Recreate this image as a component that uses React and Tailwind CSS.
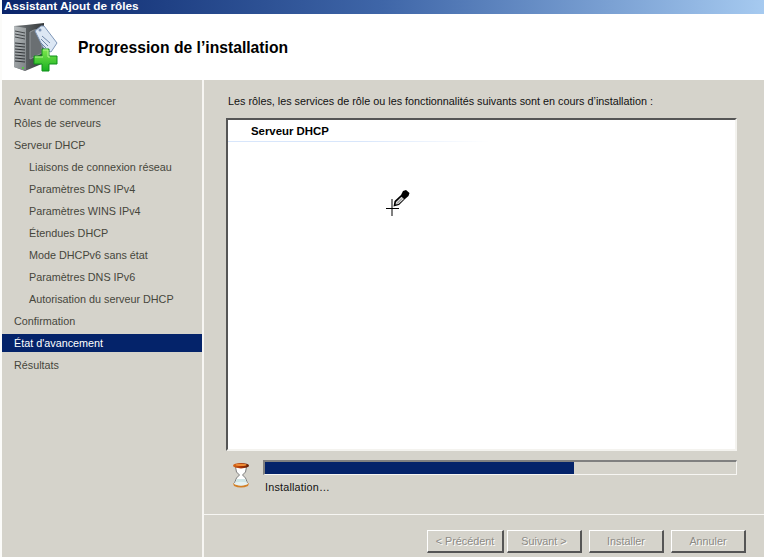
const font = { fontFamily: '"Liberation Sans", sans-serif' };

const steps = [
  ['Avant de commencer', 0],
  ['Rôles de serveurs', 0],
  ['Serveur DHCP', 0],
  ['Liaisons de connexion réseau', 1],
  ['Paramètres DNS IPv4', 1],
  ['Paramètres WINS IPv4', 1],
  ['Étendues DHCP', 1],
  ['Mode DHCPv6 sans état', 1],
  ['Paramètres DNS IPv6', 1],
  ['Autorisation du serveur DHCP', 1],
  ['Confirmation', 0],
  ["État d'avancement", 0, true],
  ['Résultats', 0],
];

function ServerIcon() {
  return (
    <svg width="46" height="49" viewBox="0 0 46 49">
      <defs>
        <linearGradient id="sv" x1="0" x2="1" y1="0" y2="0">
          <stop offset="0" stopColor="#74797c" />
          <stop offset="1" stopColor="#34383a" />
        </linearGradient>
        <linearGradient id="fr" x1="0" x2="1" y1="0" y2="1">
          <stop offset="0" stopColor="#b9bec0" />
          <stop offset="1" stopColor="#7b8083" />
        </linearGradient>
        <linearGradient id="gr" x1="0" x2="0" y1="0" y2="1">
          <stop offset="0" stopColor="#7fe84e" />
          <stop offset="1" stopColor="#18b020" />
        </linearGradient>
      </defs>
      <path d="M0 3 L12 2 L30 0 L30 40 L11 48 L0 44 Z" fill="url(#sv)" />
      <path d="M0 3 L12 5 L12 48 L0 44 Z" fill="url(#fr)" />
      <path d="M1 8 L11 10 M1 11 L11 13 M1 14 L11 16" stroke="#44484a" strokeWidth="1" />
      <path d="M1 20 L11 21 M1 23 L11 24 M1 26 L11 27 M1 29 L11 30 M1 32 L11 33 M1 35 L11 36 M1 38 L11 39" stroke="#33373a" strokeWidth="1.2" />
      <rect x="8" y="44" width="2" height="2" fill="#58c04a" />
      <path d="M16 9 Q24 4 28 9 L28 30 L16 36 Z" fill="#6a6f72" stroke="#909598" />
      <path d="M21 8 L27 3 L30 3 L43 20 L37 29 L30 26 Z" fill="#dce7f4" stroke="#7f97b8" />
      <circle cx="26" cy="7" r="1.5" fill="#7f97b8" />
      <path d="M28 13 L36 20 M27 16 L34 23 M27 20 L32 25" stroke="#6f87a8" strokeWidth="1" />
      <path d="M28 26 H35 V33 H43 V41 H35 V48 H28 V41 H20 V33 H28 Z" fill="url(#gr)" stroke="#0f8f1a" strokeWidth="1" />
      <path d="M29 27 H34 V34 H36 M21 34 H29" stroke="#b4f58f" strokeWidth="1" fill="none" />
    </svg>
  );
}

function PenCursor() {
  return (
    <svg width="26" height="28" viewBox="0 0 26 28">
      <path d="M8 11 V28 M2 20.5 H15" stroke="#000" strokeWidth="1" fill="none" />
      <path d="M9.5 18.5 L10.5 13 L17 7 L19 3 L22 2 L25.5 5 L24.5 8 L21 11 L15 17 Z" fill="#000" />
      <path d="M11.5 16.5 L12 14 L17.5 8.8 L20 11 L14.5 16 Z" fill="#d8d8d8" />
      <path d="M13 15.5 L18 10.5" stroke="#666" strokeWidth="0.8" />
    </svg>
  );
}

function Hourglass() {
  return (
    <svg width="18" height="26" viewBox="0 0 18 26">
      <defs>
        <linearGradient id="cap" x1="0" x2="1" y1="0" y2="0">
          <stop offset="0" stopColor="#d9691a" />
          <stop offset="0.5" stopColor="#a83306" />
          <stop offset="1" stopColor="#5e2006" />
        </linearGradient>
      </defs>
      <path d="M3.5 5 L14.5 5 L13.5 10 L10.5 13 L13.5 16 L15.5 21 H2.5 L4.5 16 L7.5 13 L4.5 10 Z" fill="#fff" stroke="#7d7d7d" strokeWidth="1" />
      <path d="M5 17 L13 17 L15 21 H3 Z" fill="#cfe5e5" />
      <ellipse cx="9" cy="3.7" rx="8" ry="2.7" fill="url(#cap)" />
      <ellipse cx="9" cy="2.9" rx="5.5" ry="1.1" fill="#ee8a34" />
      <path d="M1 21 Q9 27 17 21 L16 24 Q9 27 2 24 Z" fill="#d47f24" />
      <ellipse cx="9" cy="21.5" rx="7" ry="1.8" fill="#e6f1f1" />
    </svg>
  );
}

function Btn({ children }) {
  return (
    <div className="h-[23px] border-t border-l border-t-white border-l-white border-r-2 border-b-2 border-r-[#555] border-b-[#555] flex items-center justify-center text-[10.8px] text-[#8c8a85] [text-shadow:1px_1px_0_#fff]">
      {children}
    </div>
  );
}

export default function App() {
  return (
    <div className="w-[764px] h-[557px] bg-[#fbfbf9] pl-[2px] flex flex-col overflow-hidden text-[10.8px] leading-[14px] text-black" style={font}>
      <div className="h-[14px] shrink-0 bg-gradient-to-r from-[#0a246a] via-[#3f66a8] to-[#a6caf0] text-white font-bold text-[11.8px] leading-[12px] pl-[2px]">
        Assistant Ajout de rôles
      </div>
      <div className="h-[66px] shrink-0 bg-white flex items-start">
        <div className="w-[58px] pl-[12px] pt-[9px] shrink-0"><ServerIcon /></div>
        <div className="pl-[18px] pt-[25px] text-[15.7px] leading-[18px] font-bold">Progression de l’installation</div>
      </div>
      <div className="flex-1 flex min-h-0">
        <div className="w-[200px] shrink-0 bg-[#d5d3cb] pt-[10px] flex flex-col">
          {steps.map(([label, sub, active]) => (
            <div
              key={label}
              className={
                'h-[22px] shrink-0 flex ' +
                (active ? 'text-white' : 'text-[#46463c]') +
                (sub ? ' pl-[27px]' : ' pl-[12px]')
              }
            >
              <div className={active ? 'bg-[#04236a] -ml-[12px] pl-[12px] w-[200px] h-[18px] flex items-center mt-[2px]' : 'flex items-center h-[22px]'}>
                {label}
              </div>
            </div>
          ))}
        </div>
        <div className="w-[2px] shrink-0 bg-[#f7f6f3]" />
        <div className="flex-1 bg-[#d5d3cb] flex flex-col min-w-0">
          <div className="h-[38px] shrink-0 pl-[24px] pt-[14px] text-[#111]">
            Les rôles, les services de rôle ou les fonctionnalités suivants sont en cours d’installation :
          </div>
          <div className="h-[333px] ml-[22px] w-[511px] shrink-0 bg-white border-2 border-t-[#555] border-l-[#555] border-r-[#f4f3ef] border-b-[#f4f3ef]">
            <div className="w-[228px] h-[21px] pl-[23px] pt-[4px] font-bold text-[11.4px]">Serveur DHCP</div>
            <div className="h-px w-[262px] bg-gradient-to-r from-[#d8e6fb] via-[#d8e6fb] to-white" />
            <div className="relative">
              <div className="absolute left-[156px] top-[46px]"><PenCursor /></div>
            </div>
          </div>
          <div className="flex ml-[28px] mt-[9px] h-[51px] shrink-0">
            <div className="w-[31px] pt-[2px] shrink-0"><Hourglass /></div>
            <div className="w-[474px]">
              <div className="h-[15px] border border-t-2 border-l-2 border-t-[#808080] border-l-[#808080] border-r-[#f7f6f3] border-b-[#f7f6f3] bg-[#d5d3cb]">
                <div className="h-full w-[309px] bg-[#04236a]" />
              </div>
              <div className="pl-[2px] pt-[5px] text-[#111] tracking-[0.2px]">Installation…</div>
            </div>
          </div>
          <div className="h-[1px] mt-[3px] shrink-0 bg-[#f7f6f3]" />
          <div className="flex pt-[15px] pl-[223px]">
            <div className="w-[77px] mr-[3px]"><Btn>&lt; Précédent</Btn></div>
            <div className="w-[75px] mr-[7px]"><Btn>Suivant &gt;</Btn></div>
            <div className="w-[75px] mr-[7px]"><Btn>Installer</Btn></div>
            <div className="w-[75px]"><Btn>Annuler</Btn></div>
          </div>
        </div>
      </div>
    </div>
  );
}
